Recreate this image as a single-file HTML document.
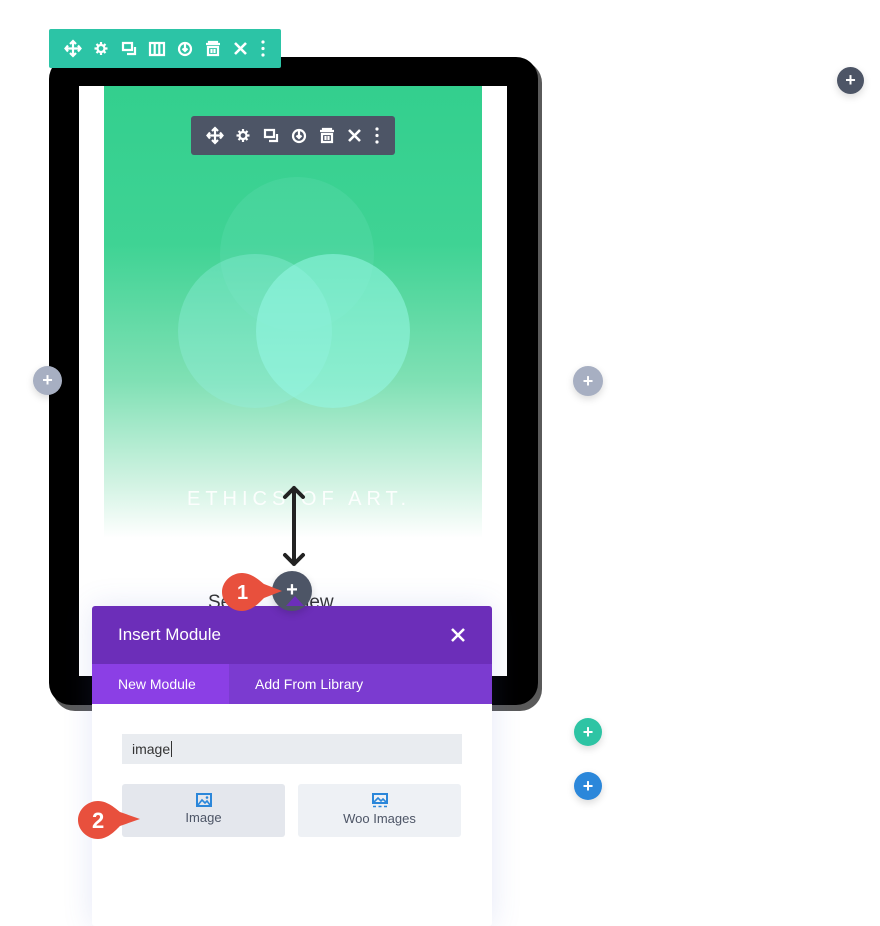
<!DOCTYPE html>
<html><head><meta charset="utf-8"><style>
*{margin:0;padding:0;box-sizing:border-box}
body{width:880px;height:913px;background:#fff;position:relative;overflow:hidden;font-family:"Liberation Sans",sans-serif}
.abs{position:absolute}
.plus{position:absolute;border-radius:50%;color:#fff;text-align:center;font-weight:bold;box-shadow:0 3px 8px rgba(0,0,0,.15)}
.tb{position:absolute;display:flex;align-items:center;border-radius:3px}
.tb svg{display:block}
.circ{position:absolute;width:154px;height:154px;border-radius:50%}
</style></head><body>
<div class="abs" style="left:53px;top:61px;width:489px;height:650px;background:#5a5a5a;border-radius:22px"></div>
<div class="abs" style="left:49px;top:57px;width:489px;height:648px;background:#000;border-radius:22px"></div>
<div class="abs" style="left:79px;top:86px;width:428px;height:590px;background:#fff"></div>
<div class="abs" style="left:104px;top:86px;width:378px;height:452px;background:linear-gradient(#33cf8e 0%,#3fd394 35%,#7fe0b4 65%,#d2f3e3 88%,#fff 100%);overflow:hidden">
 <div class="circ" style="left:116px;top:91px;background:rgba(120,230,200,.18)"></div>
 <div class="circ" style="left:74px;top:168px;background:rgba(150,240,225,.35)"></div>
 <div class="circ" style="left:152px;top:168px;background:rgba(150,248,230,.55)"></div>
 <div class="abs" style="left:83px;top:402px;color:#fff;font-size:20px;letter-spacing:5px;opacity:.9">ETHICS OF ART.</div>
</div>
<div class="abs" style="left:208px;top:592px;font-size:19px;color:#333">Se&nbsp;&nbsp;&nbsp;&nbsp;&nbsp;&nbsp;&nbsp;&nbsp;&nbsp;review</div>
<svg class="abs" style="left:280px;top:484px" width="30" height="84" viewBox="0 0 30 84"><path d="M14 4V80M5 13L14 4L23 13M5 71L14 80L23 71" stroke="#222" stroke-width="4" fill="none" stroke-linecap="round" stroke-linejoin="round"/></svg>
<div class="tb" style="left:49px;top:29px;width:232px;height:39px;background:#2cc4a6;border-radius:2px">
<svg width="232" height="39" viewBox="0 0 232 39" fill="none" stroke="#fff" stroke-width="2.2">
<path d="M24 13v13M17.5 19.5h13M21 15l3-3 3 3M21 24l3 3 3-3M19 16.5l-2.5 3 2.5 3M29 16.5l2.5 3-2.5 3"/>
<circle cx="52" cy="19.5" r="3.5"/><path d="M52 13v2.5M52 23.5V26M45.5 19.5H48M56 19.5h2.5M47.5 15l1.8 1.8M54.7 22.2l1.8 1.8M56.5 15l-1.8 1.8M49.3 22.2L47.5 24"/>
<path d="M74 14h9v7h-9zM86 18v7h-8"/>
<path d="M101 14h14v12h-14zM105.7 14v12M110.3 14v12"/>
<circle cx="136" cy="20" r="6"/><path d="M136 15v7M133.5 19.5l2.5 2.5 2.5-2.5"/>
<path d="M157 15h14M160 15v-2h8v2M159 18h10v8h-10zM162.5 20v4M165.5 20v4"/>
<path d="M186 14l11 11M197 14l-11 11" stroke-width="2.6"/>
<circle cx="214" cy="13" r="1.6" fill="#fff" stroke="none"/><circle cx="214" cy="19.5" r="1.6" fill="#fff" stroke="none"/><circle cx="214" cy="26" r="1.6" fill="#fff" stroke="none"/>
</svg></div>
<div class="tb" style="left:191px;top:116px;width:204px;height:39px;background:#4d5566">
<svg width="204" height="39" viewBox="0 0 204 39" fill="none" stroke="#fff" stroke-width="2.2">
<path d="M24 13v13M17.5 19.5h13M21 15l3-3 3 3M21 24l3 3 3-3M19 16.5l-2.5 3 2.5 3M29 16.5l2.5 3-2.5 3"/>
<circle cx="52" cy="19.5" r="3.5"/><path d="M52 13v2.5M52 23.5V26M45.5 19.5H48M56 19.5h2.5M47.5 15l1.8 1.8M54.7 22.2l1.8 1.8M56.5 15l-1.8 1.8M49.3 22.2L47.5 24"/>
<path d="M74 14h9v7h-9zM86 18v7h-8"/>
<circle cx="108" cy="20" r="6"/><path d="M108 15v7M105.5 19.5l2.5 2.5 2.5-2.5"/>
<path d="M129 15h14M132 15v-2h8v2M131 18h10v8h-10zM134.5 20v4M137.5 20v4"/>
<path d="M158 14l11 11M169 14l-11 11" stroke-width="2.6"/>
<circle cx="186" cy="13" r="1.6" fill="#fff" stroke="none"/><circle cx="186" cy="19.5" r="1.6" fill="#fff" stroke="none"/><circle cx="186" cy="26" r="1.6" fill="#fff" stroke="none"/>
</svg></div>
<div class="plus" style="left:837px;top:67px;width:27px;height:27px;background:#4d5566;font-size:18px;line-height:27px">+</div>
<div class="plus" style="left:33px;top:366px;width:29px;height:29px;background:#a7afc2;font-size:18px;line-height:29px">+</div>
<div class="plus" style="left:573px;top:366px;width:30px;height:30px;background:#a7afc2;font-size:18px;line-height:30px">+</div>
<div class="plus" style="left:574px;top:718px;width:28px;height:28px;background:#2ec4a4;font-size:18px;line-height:28px">+</div>
<div class="plus" style="left:574px;top:772px;width:28px;height:28px;background:#2b87da;font-size:18px;line-height:28px">+</div>
<div class="abs" style="left:92px;top:606px;width:400px;height:320px;background:#fff;border-radius:3px;box-shadow:0 0 30px rgba(80,100,200,.15)">
 <div style="height:58px;background:#6c2eb9;border-radius:3px 3px 0 0;color:#fff;font-size:17px;padding:19px 0 0 26px;position:relative">Insert Module
  <svg style="position:absolute;left:359px;top:22px" width="14" height="14" viewBox="0 0 14 14"><path d="M1 1l12 12M13 1L1 13" stroke="#fff" stroke-width="2.5"/></svg></div>
 <div style="height:40px;background:#7b3bd0;display:flex;color:#fff;font-size:14px">
  <div style="width:137px;background:#8b3fe5;padding:12px 0 0 26px">New Module</div>
  <div style="padding:12px 0 0 26px">Add From Library</div></div>
 <div class="abs" style="left:30px;top:128px;width:340px;height:30px;background:#e9ecf0;font-size:14px;color:#333;padding:7px 0 0 10px">image<span style="border-left:1px solid #333;margin-left:1px"></span></div>
 <div class="abs" style="left:30px;top:178px;width:163px;height:53px;background:#e4e7ed;border-radius:3px;text-align:center;font-size:13px;color:#4d5566;padding-top:9px">
  <svg width="16" height="14" viewBox="0 0 16 14"><rect x="1" y="1" width="14" height="12" fill="none" stroke="#2b87da" stroke-width="2"/><path d="M2 12l4-5 3 3 2-2 3 4" fill="none" stroke="#2b87da" stroke-width="1.6"/><circle cx="11" cy="4.5" r="1.3" fill="#2b87da"/></svg><br>Image</div>
 <div class="abs" style="left:206px;top:178px;width:163px;height:53px;background:#eef1f5;border-radius:3px;text-align:center;font-size:13px;color:#4d5566;padding-top:9px">
  <svg width="16" height="15" viewBox="0 0 16 15"><rect x="1" y="1" width="14" height="9" fill="none" stroke="#2b87da" stroke-width="2"/><path d="M2 9l4-4 3 3 2-2 3 3" fill="none" stroke="#2b87da" stroke-width="1.6"/><path d="M1 13.5h3M6.5 13.5h3M12 13.5h3" stroke="#2b87da" stroke-width="1.6"/></svg><br>Woo Images</div>
</div>
<div class="plus" style="left:272px;top:571px;width:40px;height:40px;background:#4d5566;font-size:20px;line-height:38px">+</div>
<div class="abs" style="left:286px;top:596px;width:0;height:0;border-left:9px solid transparent;border-right:9px solid transparent;border-bottom:10px solid #6c2eb9"></div>
<svg class="abs" style="left:220px;top:571px" width="70" height="42" viewBox="0 0 70 42"><path d="M22 2C32 2 40 10 44 13L62 20L44 27C40 31 32 40 22 40C11 40 2 31 2 21C2 11 11 2 22 2Z" fill="#e8503d"/><text x="17" y="28" fill="#fff" font-size="20" font-family="Liberation Sans" font-weight="bold">1</text></svg>
<svg class="abs" style="left:76px;top:799px" width="70" height="42" viewBox="0 0 70 42"><path d="M22 2C32 2 40 10 44 13L64 20L44 27C40 31 32 40 22 40C11 40 2 31 2 21C2 11 11 2 22 2Z" fill="#e8503d"/><text x="16" y="29" fill="#fff" font-size="22" font-family="Liberation Sans" font-weight="bold">2</text></svg>
</body></html>
